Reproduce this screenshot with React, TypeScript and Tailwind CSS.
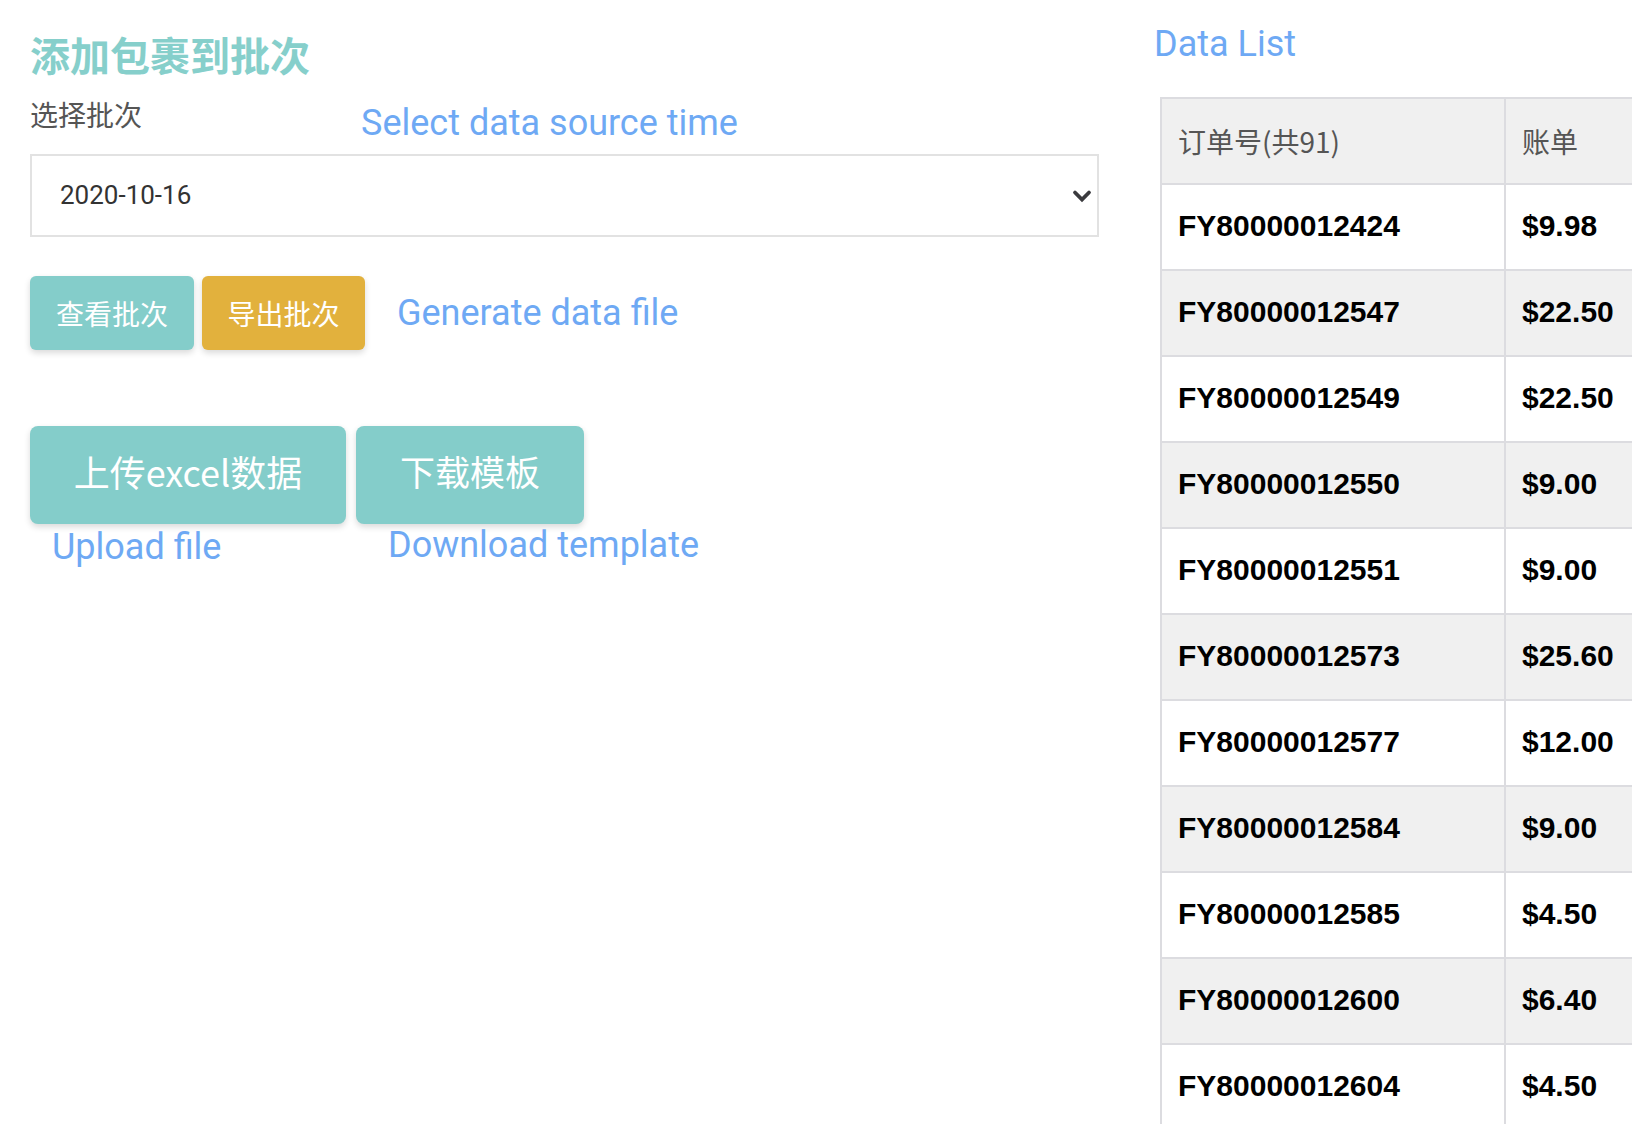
const rows = [
  ['FY80000012424', '$9.98'],
  ['FY80000012547', '$22.50'],
  ['FY80000012549', '$22.50'],
  ['FY80000012550', '$9.00'],
  ['FY80000012551', '$9.00'],
  ['FY80000012573', '$25.60'],
  ['FY80000012577', '$12.00'],
  ['FY80000012584', '$9.00'],
  ['FY80000012585', '$4.50'],
  ['FY80000012600', '$6.40'],
  ['FY80000012604', '$4.50'],
]

const cjk = "font-['Noto_Sans_CJK_SC','Noto_Sans',sans-serif]"
const note = "font-['Roboto','Liberation_Sans',sans-serif] text-[36px] leading-[40px] text-[#6ea9f4]"

export default function App() {
  return (
    <div className="w-[1632px] h-[1124px] overflow-hidden bg-white flex">
      {/* left: form */}
      <div className="w-[1069px] ml-[30px] pt-[30px] flex flex-col shrink-0">
        <h2 className={`${cjk} text-[40px] leading-[48px] font-bold text-[#86cfcb]`}>添加包裹到批次</h2>

        <div className="flex items-start mt-[16px]">
          <span className={`${cjk} text-[28px] leading-[40px] text-[#555]`}>选择批次</span>
          <span className={`${note} ml-[219px] mt-[9px]`}>Select data source time</span>
        </div>

        <div className="mt-[11px] h-[83px] border-2 border-[#e2e2e2] bg-white flex items-center justify-between pl-[28px] pr-[5px]">
          <span className="font-['Roboto','Liberation_Sans',sans-serif] text-[26px] text-[#333]">2020-10-16</span>
          <svg width="20" height="14" viewBox="0 0 20 14" fill="none" stroke="#3a3a3e" strokeWidth="3.8" strokeLinejoin="miter" strokeLinecap="round">
            <path d="M3 3.5 L10 10.5 L17 3.5" />
          </svg>
        </div>

        <div className="mt-[39px] flex items-center gap-[8px]">
          <button className={`${cjk} h-[74px] w-[164px] rounded-[6px] bg-[#84cdca] text-white text-[28px] shadow-[0_3px_6px_rgba(0,0,0,0.15)]`}>
            查看批次
          </button>
          <button className={`${cjk} h-[74px] w-[163px] rounded-[6px] bg-[#e2b13d] text-white text-[28px] shadow-[0_3px_6px_rgba(0,0,0,0.15)]`}>
            导出批次
          </button>
          <span className={`${note} ml-[24px]`}>Generate data file</span>
        </div>

        <div className="mt-[76px] flex gap-[10px]">
          <div className="flex flex-col">
            <button className={`${cjk} h-[98px] w-[316px] rounded-[8px] bg-[#84cdca] text-white text-[36px] pb-[8px] shadow-[0_3px_6px_rgba(0,0,0,0.15)]`}>
              上传excel数据
            </button>
            <span className={`${note} pl-[22px] mt-[3px]`}>Upload file</span>
          </div>
          <div className="flex flex-col">
            <button className={`${cjk} h-[98px] w-[228px] rounded-[8px] bg-[#84cdca] text-white text-[35px] pb-[8px] shadow-[0_3px_6px_rgba(0,0,0,0.15)]`}>
              下载模板
            </button>
            <span className={`${note} pl-[32px] mt-[1px]`}>Download template</span>
          </div>
        </div>
      </div>

      {/* right: data list */}
      <div className="ml-[55px] pt-[22px] flex flex-col shrink-0">
        <span className={`${note} leading-[44px]`}>Data List</span>
        <table className="mt-[31px] ml-[6px] w-[620px] border-collapse border-2 border-[#dcdce0] table-fixed">
          <colgroup>
            <col className="w-[344px]" />
            <col />
          </colgroup>
          <thead>
            <tr className="h-[86px] bg-[#f0f0f0]">
              <th className={`${cjk} border-2 border-[#dcdce0] text-left pl-[16px] text-[28px] font-normal text-[#555]`}>订单号(共91)</th>
              <th className={`${cjk} border-2 border-[#dcdce0] text-left pl-[16px] text-[28px] font-normal text-[#555]`}>账单</th>
            </tr>
          </thead>
          <tbody>
            {rows.map(([id, amount], i) => (
              <tr key={id} className={`h-[86px] ${i % 2 === 1 ? 'bg-[#f0f0f0]' : 'bg-white'}`}>
                <td className="border-2 border-[#dcdce0] pl-[16px] pb-[4px] font-['Liberation_Sans',Arial,sans-serif] font-bold text-[30px] text-black">{id}</td>
                <td className="border-2 border-[#dcdce0] pl-[16px] pb-[4px] font-['Liberation_Sans',Arial,sans-serif] font-bold text-[30px] text-black">{amount}</td>
              </tr>
            ))}
          </tbody>
        </table>
      </div>
    </div>
  )
}
